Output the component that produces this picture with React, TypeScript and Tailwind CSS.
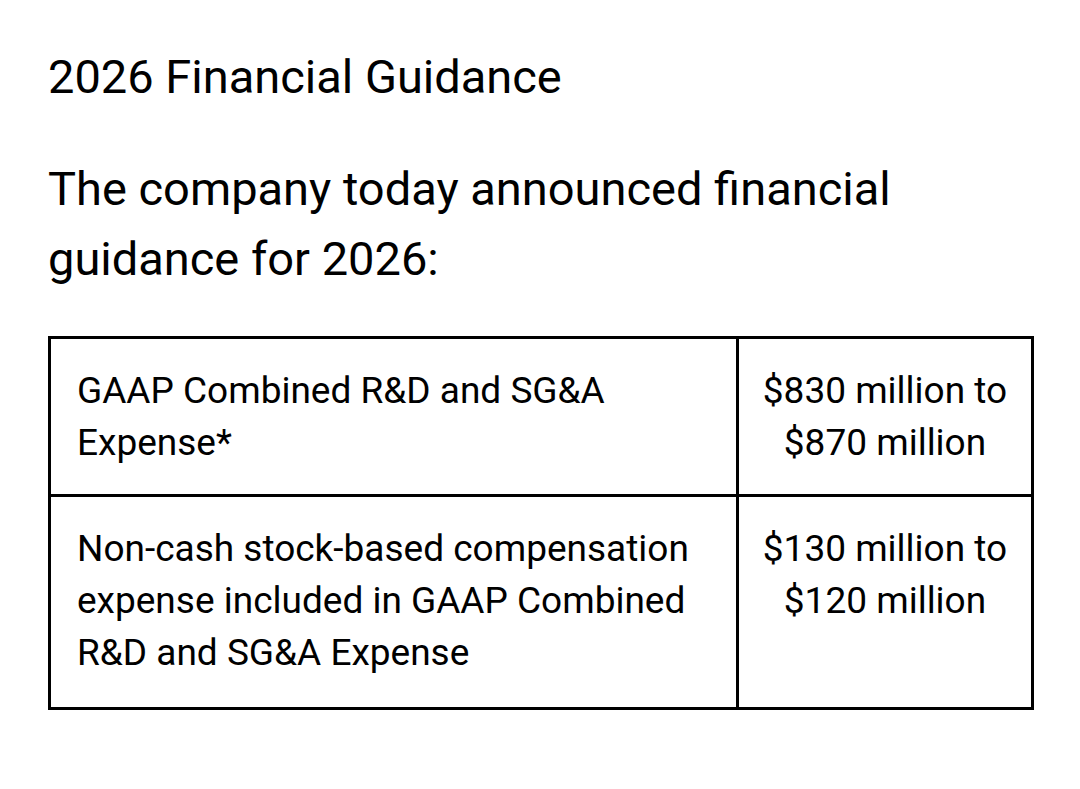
const rows = [
  {
    label: "GAAP Combined R&D and SG&A Expense*",
    value: ["$830 million to", "$870 million"],
    pad: "pb-[25px]",
  },
  {
    label:
      "Non-cash stock-based compensation expense included in GAAP Combined R&D and SG&A Expense",
    value: ["$130 million to", "$120 million"],
    pad: "pb-[28px]",
  },
];

const App = () => {
  return (
    <div className="min-h-[789px] w-[1080px] bg-white pl-[48px] pt-[52px] text-black font-['Roboto',sans-serif]">
      <h1 className="text-[47px] leading-[50px] font-normal">
        2026 Financial Guidance
      </h1>

      <p className="mt-[52px] text-[47px] leading-[70px] w-[900px]">
        The company today announced financial guidance for 2026:
      </p>

      <table className="mt-[42px] w-[986px] border-collapse border-[3px] border-black text-[37px] leading-[52px]">
        <tbody>
          {rows.map((row) => (
            <tr key={row.label}>
              <td
                className={`w-[688px] border-[3px] border-black pl-[26px] pr-[20px] pt-[26px] align-top ${row.pad}`}
              >
                {row.label}
              </td>
              <td
                className={`border-[3px] border-black px-[10px] pt-[26px] align-top text-center ${row.pad}`}
              >
                {row.value.map((line) => (
                  <div key={line}>{line}</div>
                ))}
              </td>
            </tr>
          ))}
        </tbody>
      </table>
    </div>
  );
};

export default App;
